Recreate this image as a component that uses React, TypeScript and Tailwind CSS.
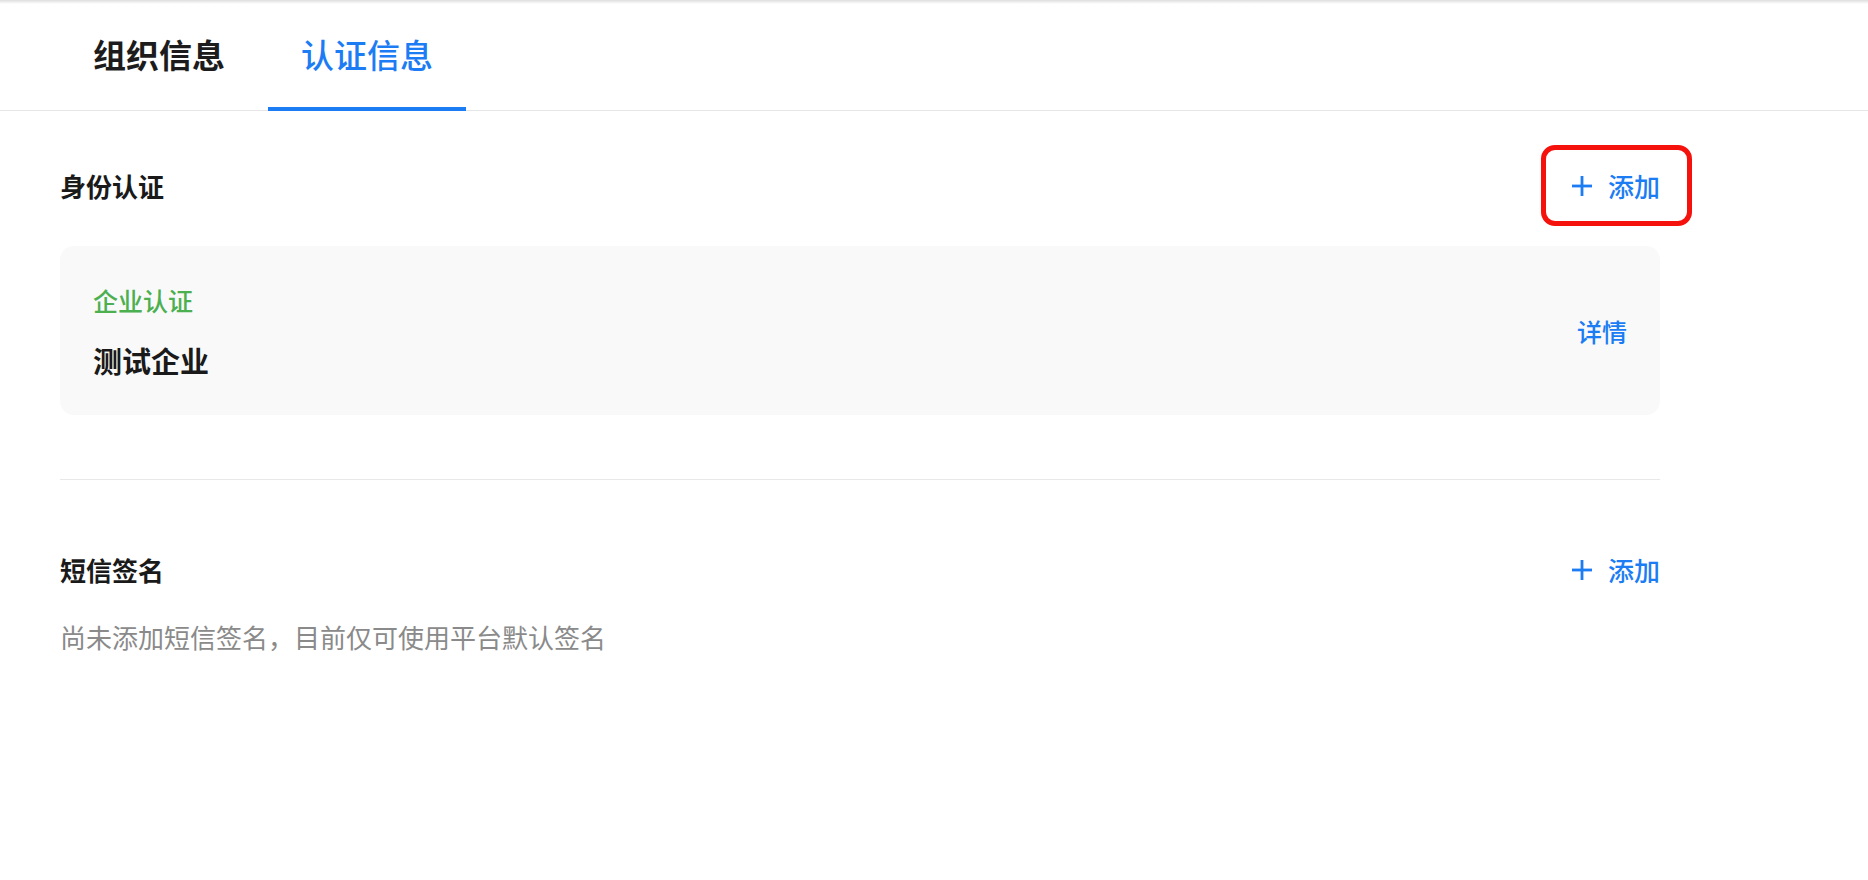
import type { ReactNode } from "react";

const BLUE = "text-[#1b7cf4]";

function PlusIcon() {
  return (
    <svg width="22" height="22" viewBox="0 0 22 22" fill="none" stroke="currentColor" strokeWidth="2.8" strokeLinecap="butt">
      <line x1="11" y1="1" x2="11" y2="21" />
      <line x1="1" y1="11" x2="21" y2="11" />
    </svg>
  );
}

function AddButton({ highlighted = false }: { highlighted?: boolean }) {
  return (
    <button type="button" className={`relative flex h-[40px] items-center gap-[15px] ${BLUE}`}>
      <PlusIcon />
      <span className="text-[26px] font-medium leading-[26px]">添加</span>
      {highlighted ? (
        <span className="pointer-events-none absolute -left-[30px] -right-[32px] -top-[21px] -bottom-[20px] rounded-[14px] border-[5px] border-[#f5110c]" />
      ) : null}
    </button>
  );
}

function SectionHeader({ title, children }: { title: string; children: ReactNode }) {
  return (
    <div className="flex h-[40px] items-center justify-between">
      <h2 className="text-[26px] font-semibold leading-[26px] text-[#1a1a1a]">{title}</h2>
      {children}
    </div>
  );
}

export default function App() {
  return (
    <div
      className="min-h-screen bg-white"
      style={{ fontFamily: '"Noto Sans CJK SC", "Noto Sans", sans-serif' }}
    >
      <div className="h-[4px] bg-gradient-to-b from-[#dedede] to-white" />

      <nav className="flex gap-[10px] border-b border-[#e6e6e6] pl-[60px]">
        <button type="button" className="-mb-px flex h-[107px] items-start px-[33px] pt-[34px] text-[33px] font-semibold leading-[33px] text-[#1c1c1c]">
          组织信息
        </button>
        <button
          type="button"
          className={`-mb-px flex h-[107px] items-start border-b-[4px] border-[#1b7cf4] px-[33px] pt-[34px] text-[33px] font-medium leading-[33px] ${BLUE}`}
        >
          认证信息
        </button>
      </nav>

      <main className="w-[1600px] ml-[60px]">
        <section className="mt-[55px]">
          <SectionHeader title="身份认证">
            <AddButton highlighted />
          </SectionHeader>

          <div className="mt-[40px] flex h-[169px] items-center justify-between rounded-[14px] bg-[#f9f9f9] px-[33px]">
            <div className="flex flex-col">
              <span className="text-[25px] font-medium leading-[26px] text-[#4caf50]">企业认证</span>
              <span className="mt-[32px] text-[29px] font-semibold leading-[30px] text-[#1a1a1a]">测试企业</span>
            </div>
            <button type="button" className={`text-[25px] font-medium leading-[26px] ${BLUE}`}>
              详情
            </button>
          </div>
        </section>

        <div className="mt-[64px] h-px bg-[#e8e8e8]" />

        <section className="mt-[70px]">
          <SectionHeader title="短信签名">
            <AddButton />
          </SectionHeader>
          <p className="mt-[33px] text-[26px] leading-[28px] text-[#8a8a8a]">
            尚未添加短信签名，目前仅可使用平台默认签名
          </p>
        </section>
      </main>
    </div>
  );
}
